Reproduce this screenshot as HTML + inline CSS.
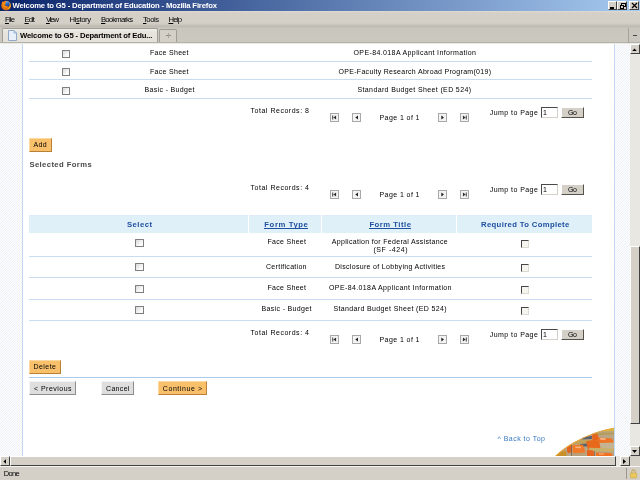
<!DOCTYPE html>
<html><head><meta charset="utf-8"><title>Welcome to G5</title>
<style>
*{box-sizing:border-box;margin:0;padding:0}
html,body{width:640px;height:480px;overflow:hidden;background:#fff;font-family:"Liberation Sans",sans-serif;}
body{position:relative}
.a{position:absolute}
.tx{position:absolute;white-space:pre;line-height:10px;height:10px;opacity:0.999}
#title{left:0;top:0;width:640px;height:11px;background:linear-gradient(90deg,#0a246a 0%,#a6caf0 100%)}
#menu{left:0;top:11px;width:640px;height:15px;background:linear-gradient(180deg,#dedbd4 0,#d4d0c8 2px,#d4d0c8 12px,#c2beb6 15px)}
#tabs{left:0;top:26px;width:640px;height:17px;background:linear-gradient(180deg,#b9b6ae 0,#c9c6be 2px,#cbc8c0 100%)}
#tab{left:2px;top:28px;width:156px;height:15px;background:linear-gradient(180deg,#f1efea 0,#e6e4dd 3px,#e3e0d9 100%);border:1px solid #a09d95;border-bottom:none;border-radius:2px 2px 0 0}
#ntab{left:159px;top:29px;width:18px;height:14px;background:#d4d0c8;border:1px solid #a09d95;border-bottom:none;border-radius:2px 2px 0 0}
.stripe{background:repeating-linear-gradient(135deg,#ffffff 0,#e8eef5 0.884px,#ffffff 1.768px)}
.hl{position:absolute;height:1px;background:#c9dcf2;left:29px;width:562.5px}
.cb{position:absolute;width:8.4px;height:8.2px;border:1px solid #7e7e7e;background:linear-gradient(135deg,#d9d9d9,#fbfbfb 70%);border-radius:0.5px}
.cbd{position:absolute;width:8.2px;height:8.2px;border:1px solid #dcd9d0;border-top:1.4px solid #454545;border-left:1.4px solid #454545;background:#f5f4ef}
.nav{position:absolute;width:9px;height:9px;border:1px solid #a8a8a8;background:#f3f3f3}
.nav svg{position:absolute;left:0;top:0}
.btn{position:absolute}
.or{background:#f9c06c;border:1px solid #fcd9a0;border-right-color:#b98036;border-bottom-color:#b98036}
.gr{background:#dedede;border:1px solid #f4f4f4;border-right-color:#8c8c8c;border-bottom-color:#8c8c8c}
.go{background:#d4d0c8;border:1px solid #fff;border-right-color:#55524c;border-bottom-color:#55524c}
.inp{position:absolute;background:#fff;border:1.2px solid #4a4a4a;border-right-color:#d4d0c8;border-bottom-color:#d4d0c8}
.sb{background:#d4d0c8;border:1px solid #fff;border-right-color:#404040;border-bottom-color:#404040}

</style></head><body>
<div id="title" class="a"></div>
<svg class="a" style="left:0px;top:0" width="13" height="11" viewBox="0 0 13 11"><defs><radialGradient id="fx" cx="0.45" cy="0.45" r="0.6"><stop offset="0" stop-color="#f08c18"/><stop offset="0.7" stop-color="#e06c0c"/><stop offset="1" stop-color="#b84c08"/></radialGradient><linearGradient id="gl" x1="0" y1="0" x2="0.3" y2="1"><stop offset="0" stop-color="#8fd0f8"/><stop offset="0.45" stop-color="#2f78d8"/><stop offset="1" stop-color="#123a9a"/></linearGradient></defs>
<circle cx="6.1" cy="5.6" r="4.9" fill="url(#fx)"/>
<circle cx="7.2" cy="3.9" r="2.7" fill="url(#gl)"/>
<path d="M2 1.2 L3.2 2.2 Q5 1.4 6.2 2.2 Q5.2 3 5.6 4 Q4.6 4.6 5.2 5.6 Q6.4 6.2 7.6 5.6 Q7.4 7.6 5.4 7.6 Q2.6 7.4 2.2 4.6 Q1.6 3 2 1.2 Z" fill="#ee8a14"/>
<path d="M9.3 2.2 Q11.2 4 10.6 6.6 Q9.8 9.2 7.2 9.8 Q9.6 8 9.8 5.6 Q9.9 3.8 9.3 2.2 Z" fill="#f9c426"/>
<path d="M4.2 4.6 Q5 5.4 6 5.3 L5.2 5.9 Z" fill="#a83808"/>
</svg>
<div id="menu" class="a"></div>
<div id="tabs" class="a"></div>

<div id="tab" class="a"></div>
<svg class="a" style="left:8px;top:30px" width="9" height="11" viewBox="0 0 9 11"><path d="M0.5 0.5 H6 L8.5 3 V10.5 H0.5 Z" fill="#e8f1fb" stroke="#8fa8c8" stroke-width="1"/><path d="M6 0.5 V3 H8.5" fill="#bcd2ee" stroke="#8fa8c8" stroke-width="0.8"/></svg>
<div id="ntab" class="a"></div>
<div class="a" style="left:165.5px;top:35px;width:5px;height:1px;background:#8c8982"></div>
<div class="a" style="left:167.5px;top:33px;width:1px;height:5px;background:#a8a59d"></div>
<div class="a" style="left:0;top:42px;width:640px;height:1.4px;background:#b4b1a9"></div><div class="a" style="left:0;top:43.4px;width:640px;height:1px;background:#eceae5"></div>
<!-- window controls -->
<div class="a" style="left:607.5px;top:1px;width:9.5px;height:9px;background:#d4d0c8;border:1px solid #fff;border-right-color:#404040;border-bottom-color:#404040"></div>
<div class="a" style="left:617px;top:1px;width:10px;height:9px;background:#d4d0c8;border:1px solid #fff;border-right-color:#404040;border-bottom-color:#404040"></div>
<div class="a" style="left:628.5px;top:1px;width:10.5px;height:9px;background:#d4d0c8;border:1px solid #fff;border-right-color:#404040;border-bottom-color:#404040"></div>
<div class="a" style="left:610px;top:7px;width:4px;height:1.5px;background:#000"></div>
<div class="a" style="left:621px;top:2.5px;width:4.5px;height:4px;border:1px solid #000;border-top-width:1.5px"></div><div class="a" style="left:619.5px;top:4.5px;width:4.5px;height:4px;border:1px solid #000;border-top-width:1.5px;background:#d4d0c8"></div>
<svg class="a" style="left:630.5px;top:2px" width="7" height="7" viewBox="0 0 7 7"><path d="M1 1 L6 6 M6 1 L1 6" stroke="#000" stroke-width="1.2"/></svg>
<!-- tab bar right: list all tabs -->
<div class="a" style="left:628px;top:28px;width:1px;height:15px;background:#a5a29a"></div>
<div class="a" style="left:633px;top:35px;width:4px;height:1px;background:#444"></div>

<!-- content frame -->
<svg class="a" style="left:0;top:0" width="0" height="0"><defs><pattern id="stp" width="5" height="5" patternUnits="userSpaceOnUse"><rect width="5" height="5" fill="#fff"/><path d="M-1 1 L1 -1 M-1 3.5 L3.5 -1 M-1 6 L6 -1 M1.5 6 L6 1.5 M4 6 L6 4" stroke="#e3eaf3" stroke-width="0.8" fill="none"/></pattern></defs></svg>
<svg class="a" style="left:0;top:44px" width="22" height="412"><rect width="22" height="412" fill="url(#stp)"/></svg>
<div class="a" style="left:22px;top:44px;width:1px;height:412px;background:#c3d8f1"></div>
<div class="a" style="left:614px;top:44px;width:1px;height:412px;background:#c3d8f1"></div>
<svg class="a" style="left:615px;top:44px" width="15" height="412"><rect width="15" height="412" fill="url(#stp)"/></svg>

<!-- vertical scrollbar -->
<div class="a" style="left:630px;top:44px;width:10px;height:412px;background:#e9e7e2"></div>
<div class="a sb" style="left:630px;top:44px;width:10px;height:10px"></div>
<svg class="a" style="left:632.3px;top:47.8px" width="5" height="3.3" viewBox="0 0 6 4"><path d="M0 4 L3 0.5 L6 4 Z" fill="#000"/></svg>
<div class="a sb" style="left:630px;top:245.5px;width:10px;height:178.5px"></div>
<div class="a sb" style="left:630px;top:446px;width:10px;height:10px"></div>
<svg class="a" style="left:632.3px;top:449.5px" width="5" height="3.3" viewBox="0 0 6 4"><path d="M0 0 L3 3.5 L6 0 Z" fill="#000"/></svg>
<!-- horizontal scrollbar -->
<div class="a" style="left:0;top:456px;width:630px;height:10px;background:#e9e7e2"></div>
<div class="a sb" style="left:0;top:456px;width:10px;height:10px"></div>
<svg class="a" style="left:3px;top:458.5px" width="3.4" height="5" viewBox="0 0 4 6"><path d="M4 0 L0.5 3 L4 6 Z" fill="#000"/></svg>
<div class="a sb" style="left:10px;top:456px;width:606px;height:10px"></div>
<div class="a sb" style="left:620px;top:456px;width:10px;height:10px"></div>
<svg class="a" style="left:623.3px;top:458.5px" width="3.4" height="5" viewBox="0 0 4 6"><path d="M0 0 L3.5 3 L0 6 Z" fill="#000"/></svg>
<div class="a" style="left:630px;top:456px;width:10px;height:10px;background:#d4d0c8"></div>
<!-- status bar -->
<div class="a" style="left:0;top:466px;width:640px;height:14px;background:#d4d0c8;border-top:1px solid #f5f4f0"></div>
<div class="a" style="left:626px;top:468px;width:1px;height:11px;background:#9a978f"></div>
<svg class="a" style="left:629px;top:468px" width="9" height="11" viewBox="0 0 9 11"><path d="M2.8 5.2 V3.6 A1.7 1.7 0 0 1 6.2 3.6 V5.2" fill="none" stroke="#c9ab58" stroke-width="1.1"/><rect x="1.3" y="5" width="6.4" height="5" rx="0.6" fill="#e9c75a" stroke="#bfa04a" stroke-width="0.5"/></svg>

<!-- top table -->
<div class="cb" style="left:62px;top:50px"></div>
<div class="hl" style="top:61px"></div>
<div class="cb" style="left:62px;top:68.1px"></div>
<div class="hl" style="top:79px"></div>
<div class="cb" style="left:62px;top:87px"></div>
<div class="hl" style="top:98px"></div>

<div class="nav" style="left:330px;top:113px"><svg width="7" height="7" viewBox="0 0 7 7"><path d="M1.3 1.4H2.2V5.6H1.3ZM5.1 1.4L2.4 3.5L5.1 5.6Z" fill="#2a2a2a"/></svg></div>
<div class="nav" style="left:352px;top:113px"><svg width="7" height="7" viewBox="0 0 7 7"><path d="M5 1.5L2.3 3.5L5 5.5Z" fill="#222"/></svg></div>
<div class="nav" style="left:438px;top:113px"><svg width="7" height="7" viewBox="0 0 7 7"><path d="M2.3 1.5L5 3.5L2.3 5.5Z" fill="#222"/></svg></div>
<div class="nav" style="left:460.3px;top:113px"><svg width="7" height="7" viewBox="0 0 7 7"><path d="M4.8 1.4H5.7V5.6H4.8ZM1.9 1.4L4.6 3.5L1.9 5.6Z" fill="#2a2a2a"/></svg></div>
<div class="inp" style="left:540.5px;top:106.5px;width:17px;height:11px"></div>
<div class="btn go" style="left:561px;top:107px;width:23px;height:11px"></div>
<div class="nav" style="left:330px;top:190px"><svg width="7" height="7" viewBox="0 0 7 7"><path d="M1.3 1.4H2.2V5.6H1.3ZM5.1 1.4L2.4 3.5L5.1 5.6Z" fill="#2a2a2a"/></svg></div>
<div class="nav" style="left:352px;top:190px"><svg width="7" height="7" viewBox="0 0 7 7"><path d="M5 1.5L2.3 3.5L5 5.5Z" fill="#222"/></svg></div>
<div class="nav" style="left:438px;top:190px"><svg width="7" height="7" viewBox="0 0 7 7"><path d="M2.3 1.5L5 3.5L2.3 5.5Z" fill="#222"/></svg></div>
<div class="nav" style="left:460.3px;top:190px"><svg width="7" height="7" viewBox="0 0 7 7"><path d="M4.8 1.4H5.7V5.6H4.8ZM1.9 1.4L4.6 3.5L1.9 5.6Z" fill="#2a2a2a"/></svg></div>
<div class="inp" style="left:540.5px;top:183.5px;width:17px;height:11px"></div>
<div class="btn go" style="left:561px;top:184px;width:23px;height:11px"></div>
<div class="nav" style="left:330px;top:335px"><svg width="7" height="7" viewBox="0 0 7 7"><path d="M1.3 1.4H2.2V5.6H1.3ZM5.1 1.4L2.4 3.5L5.1 5.6Z" fill="#2a2a2a"/></svg></div>
<div class="nav" style="left:352px;top:335px"><svg width="7" height="7" viewBox="0 0 7 7"><path d="M5 1.5L2.3 3.5L5 5.5Z" fill="#222"/></svg></div>
<div class="nav" style="left:438px;top:335px"><svg width="7" height="7" viewBox="0 0 7 7"><path d="M2.3 1.5L5 3.5L2.3 5.5Z" fill="#222"/></svg></div>
<div class="nav" style="left:460.3px;top:335px"><svg width="7" height="7" viewBox="0 0 7 7"><path d="M4.8 1.4H5.7V5.6H4.8ZM1.9 1.4L4.6 3.5L1.9 5.6Z" fill="#2a2a2a"/></svg></div>
<div class="inp" style="left:540.5px;top:328.5px;width:17px;height:11px"></div>
<div class="btn go" style="left:561px;top:329px;width:23px;height:11px"></div>


<!-- Add -->
<div class="btn or" style="left:28.5px;top:137.5px;width:23px;height:14.5px"></div>

<!-- header -->
<div class="a" style="left:28.5px;top:215px;width:563px;height:17.5px;background:#dff0f9;box-shadow:inset 0 0.5px 0 #dde6f8"></div>
<div class="a" style="left:247.7px;top:215px;width:1.6px;height:17.5px;background:#fff"></div>
<div class="a" style="left:320.7px;top:215px;width:1.6px;height:17.5px;background:#fff"></div>
<div class="a" style="left:455.7px;top:215px;width:1.6px;height:17.5px;background:#fff"></div>
<!-- rows -->
<div class="cb" style="left:135.4px;top:238.8px"></div><div class="cbd" style="left:520.9px;top:239.9px"></div>
<div class="hl" style="top:256px"></div>
<div class="cb" style="left:135.4px;top:263px"></div><div class="cbd" style="left:520.9px;top:264.2px"></div>
<div class="hl" style="top:277px"></div>
<div class="cb" style="left:135.4px;top:284.6px"></div><div class="cbd" style="left:520.9px;top:285.6px"></div>
<div class="hl" style="top:298.7px"></div>
<div class="cb" style="left:135.4px;top:305.8px"></div><div class="cbd" style="left:520.9px;top:306.8px"></div>
<div class="hl" style="top:320px"></div>

<!-- Delete + buttons -->
<div class="btn or" style="left:28.6px;top:359.8px;width:32.3px;height:14px"></div>
<div class="a" style="left:29px;top:377px;width:563px;height:1px;background:#a9c9ef"></div>
<div class="btn gr" style="left:28.7px;top:381.2px;width:47.2px;height:14.3px"></div>
<div class="btn gr" style="left:100.7px;top:381.2px;width:33.2px;height:14.3px"></div>
<div class="btn or" style="left:157.5px;top:381.2px;width:49px;height:14.3px"></div>

<!-- chairs image -->
<svg class="a" style="left:554px;top:426px" width="60" height="30" viewBox="0 0 60 30">
<defs><clipPath id="arc"><path d="M1.2 30 Q9 22.5 20 16.3 Q30 10.8 40 7 Q50 3.6 60 1.8 V30 Z"/></clipPath><filter id="bl" x="-5%" y="-5%" width="110%" height="110%"><feGaussianBlur stdDeviation="0.45"/></filter></defs>
<g clip-path="url(#arc)">
<g filter="url(#bl)">
<rect x="-2" y="-2" width="64" height="34" fill="#b9a583"/>
<rect x="46" y="16" width="14" height="7" fill="#c4b494"/>
<path d="M48 2 L60 1 V5 L50 5.5 Z" fill="#d9b242"/>
<path d="M38 7 L60 6.5 V8.6 L40 9 Z" fill="#b59c5c"/>
<path d="M26 11 L38 10 L38 13 L28 13.5 Z" fill="#5a6070"/>
<path d="M18 15 L37 13.6 L38 17.2 L20 18 Z" fill="#c2a258"/>
<path d="M26 18 L34 17.5 L34 20.5 L27 20.5 Z" fill="#5c606c"/>
<path d="M38 8.5 L44 8 L44.5 14 L38.5 14.5 Z" fill="#e8661a"/>
<path d="M44 11.5 L58 12.5 L60 16.5 L46 17 L43 14 Z" fill="#ee7426"/>
<path d="M46 12 L52 12.3 L51 14 L46.5 13.8 Z" fill="#f8b488"/>
<path d="M32 15.5 Q38 13 45 14.5 L46.5 22.5 L34 23.5 Z" fill="#e8681a"/>
<path d="M35 21.8 L60 22.6 V25.6 L36 25.2 Z" fill="#c9b068"/>
<path d="M12.5 20 L17 18.6 L17.5 26.5 L13.5 27 Z" fill="#e4621a"/>
<path d="M18 19 L29 18.8 L31.5 26.5 L19 27.5 Z" fill="#f07a2a"/>
<path d="M21 20.5 L27 20.6 L27 22.2 L21.5 22 Z" fill="#f9b27c"/>
<rect x="17" y="19" width="0.9" height="11" fill="#6e5e4a" opacity="0.8"/>
<rect x="40" y="25" width="0.8" height="5" fill="#6e5e4a" opacity="0.8"/>
<path d="M33 24 L39.5 24.5 L40 30 L33 30 Z" fill="#e8641a"/>
<path d="M42 26.5 L57 27 L59 30 L42 30 Z" fill="#ee7224"/>
<path d="M45 27.2 L50 27.4 L50 28.6 L45 28.4 Z" fill="#f7b07c"/>
<path d="M3 27 L12 24.5 L12.5 30 L2 30 Z" fill="#c8902a"/>
<path d="M19 27.5 L31 27 L32 30 L19 30 Z" fill="#b8a07a"/>
</g>
<path d="M1.2 30 Q9 22.5 20 16.3 Q30 10.8 40 7 Q50 3.6 60 1.8" fill="none" stroke="#eda42e" stroke-width="1.6"/>
</g></svg>

<div class="tx" style="left:12.50px;top:1.20px;font-size:7.7px;font-weight:bold;color:#fff;letter-spacing:-0.167px;">Welcome to G5 - Department of Education - Mozilla Firefox</div>
<div class="tx" style="left:5.00px;top:14.80px;font-size:7.7px;font-weight:normal;color:#000;letter-spacing:-0.797px;"><u>F</u>ile</div>
<div class="tx" style="left:24.50px;top:14.80px;font-size:7.7px;font-weight:normal;color:#000;letter-spacing:-0.917px;"><u>E</u>dit</div>
<div class="tx" style="left:46.00px;top:14.80px;font-size:7.7px;font-weight:normal;color:#000;letter-spacing:-1.177px;"><u>V</u>iew</div>
<div class="tx" style="left:69.50px;top:14.80px;font-size:7.7px;font-weight:normal;color:#000;letter-spacing:-0.404px;">Hi<u>s</u>tory</div>
<div class="tx" style="left:101.00px;top:14.80px;font-size:7.7px;font-weight:normal;color:#000;letter-spacing:-0.807px;"><u>B</u>ookmarks</div>
<div class="tx" style="left:143.00px;top:14.80px;font-size:7.7px;font-weight:normal;color:#000;letter-spacing:-0.488px;"><u>T</u>ools</div>
<div class="tx" style="left:168.50px;top:14.80px;font-size:7.7px;font-weight:normal;color:#000;letter-spacing:-0.771px;"><u>H</u>elp</div>
<div class="tx" style="left:20.00px;top:30.80px;font-size:7.7px;font-weight:bold;color:#000;letter-spacing:-0.140px;">Welcome to G5 - Department of Edu...</div>
<div class="tx" style="left:3.80px;top:468.70px;font-size:7.5px;font-weight:normal;color:#000;letter-spacing:-0.679px;">Done</div>
<div class="tx" style="left:150.00px;top:47.50px;font-size:7.0px;font-weight:normal;color:#000;letter-spacing:0.299px;">Face Sheet</div>
<div class="tx" style="left:353.50px;top:47.50px;font-size:7.0px;font-weight:normal;color:#000;letter-spacing:0.387px;">OPE-84.018A Applicant Information</div>
<div class="tx" style="left:150.00px;top:66.50px;font-size:7.0px;font-weight:normal;color:#000;letter-spacing:0.299px;">Face Sheet</div>
<div class="tx" style="left:338.50px;top:66.50px;font-size:7.0px;font-weight:normal;color:#000;letter-spacing:0.299px;">OPE-Faculty Research Abroad Program(019)</div>
<div class="tx" style="left:144.50px;top:85.00px;font-size:7.0px;font-weight:normal;color:#000;letter-spacing:0.344px;">Basic - Budget</div>
<div class="tx" style="left:357.50px;top:85.00px;font-size:7.0px;font-weight:normal;color:#000;letter-spacing:0.371px;">Standard Budget Sheet (ED 524)</div>
<div class="tx" style="left:250.50px;top:105.60px;font-size:7.0px;font-weight:normal;color:#000;letter-spacing:0.527px;">Total Records: 8</div>
<div class="tx" style="left:379.50px;top:113.20px;font-size:7.0px;font-weight:normal;color:#000;letter-spacing:0.419px;">Page 1 of 1</div>
<div class="tx" style="left:489.80px;top:107.60px;font-size:7.0px;font-weight:normal;color:#000;letter-spacing:0.436px;">Jump to Page</div>
<div class="tx" style="left:543.00px;top:108.20px;font-size:7.0px;font-weight:normal;color:#000;letter-spacing:0.000px;">1</div>
<div class="tx" style="left:568.00px;top:107.60px;font-size:7.0px;font-weight:normal;color:#000;letter-spacing:-0.344px;">Go</div>
<div class="tx" style="left:250.50px;top:182.60px;font-size:7.0px;font-weight:normal;color:#000;letter-spacing:0.527px;">Total Records: 4</div>
<div class="tx" style="left:379.50px;top:190.20px;font-size:7.0px;font-weight:normal;color:#000;letter-spacing:0.419px;">Page 1 of 1</div>
<div class="tx" style="left:489.80px;top:184.60px;font-size:7.0px;font-weight:normal;color:#000;letter-spacing:0.436px;">Jump to Page</div>
<div class="tx" style="left:543.00px;top:185.20px;font-size:7.0px;font-weight:normal;color:#000;letter-spacing:0.000px;">1</div>
<div class="tx" style="left:568.00px;top:184.60px;font-size:7.0px;font-weight:normal;color:#000;letter-spacing:-0.344px;">Go</div>
<div class="tx" style="left:250.50px;top:327.60px;font-size:7.0px;font-weight:normal;color:#000;letter-spacing:0.527px;">Total Records: 4</div>
<div class="tx" style="left:379.50px;top:335.20px;font-size:7.0px;font-weight:normal;color:#000;letter-spacing:0.419px;">Page 1 of 1</div>
<div class="tx" style="left:489.80px;top:329.60px;font-size:7.0px;font-weight:normal;color:#000;letter-spacing:0.436px;">Jump to Page</div>
<div class="tx" style="left:543.00px;top:330.20px;font-size:7.0px;font-weight:normal;color:#000;letter-spacing:0.000px;">1</div>
<div class="tx" style="left:568.00px;top:329.60px;font-size:7.0px;font-weight:normal;color:#000;letter-spacing:-0.344px;">Go</div>
<div class="tx" style="left:33.50px;top:139.80px;font-size:7.0px;font-weight:normal;color:#000;letter-spacing:0.316px;">Add</div>
<div class="tx" style="left:29.40px;top:159.60px;font-size:7.7px;font-weight:bold;color:#4a4a4a;letter-spacing:0.387px;">Selected Forms</div>
<div class="tx" style="left:33.40px;top:362.00px;font-size:7.0px;font-weight:normal;color:#000;letter-spacing:0.473px;">Delete</div>
<div class="tx" style="left:34.00px;top:383.50px;font-size:7.0px;font-weight:normal;color:#000;letter-spacing:0.469px;">&lt; Previous</div>
<div class="tx" style="left:106.00px;top:383.50px;font-size:7.0px;font-weight:normal;color:#000;letter-spacing:0.321px;">Cancel</div>
<div class="tx" style="left:162.80px;top:383.50px;font-size:7.0px;font-weight:normal;color:#000;letter-spacing:0.571px;">Continue &gt;</div>
<div class="tx" style="left:497.50px;top:433.50px;font-size:7.0px;font-weight:normal;color:#3878c0;letter-spacing:0.484px;">^ Back to Top</div>
<div class="tx" style="left:127.00px;top:219.80px;font-size:7.7px;font-weight:bold;color:#1f4fa0;letter-spacing:0.469px;">Select</div>
<div class="a" style="left:264.30px;top:228.00px;width:43.60px;height:0.9px;background:#1f4fa0"></div>
<div class="tx" style="left:264.30px;top:219.80px;font-size:7.7px;font-weight:bold;color:#1f4fa0;letter-spacing:0.608px;">Form Type</div>
<div class="a" style="left:369.40px;top:228.00px;width:41.60px;height:0.9px;background:#1f4fa0"></div>
<div class="tx" style="left:369.40px;top:219.80px;font-size:7.7px;font-weight:bold;color:#1f4fa0;letter-spacing:0.508px;">Form Title</div>
<div class="tx" style="left:481.00px;top:219.80px;font-size:7.7px;font-weight:bold;color:#1f4fa0;letter-spacing:0.361px;">Required To Complete</div>
<div class="tx" style="left:267.50px;top:237.30px;font-size:7.0px;font-weight:normal;color:#000;letter-spacing:0.299px;">Face Sheet</div>
<div class="tx" style="left:331.80px;top:237.30px;font-size:7.0px;font-weight:normal;color:#000;letter-spacing:0.317px;">Application for Federal Assistance</div>
<div class="tx" style="left:373.40px;top:244.60px;font-size:7.0px;font-weight:normal;color:#000;letter-spacing:0.567px;">(SF -424)</div>
<div class="tx" style="left:266.00px;top:261.50px;font-size:7.0px;font-weight:normal;color:#000;letter-spacing:0.294px;">Certification</div>
<div class="tx" style="left:335.00px;top:261.50px;font-size:7.0px;font-weight:normal;color:#000;letter-spacing:0.312px;">Disclosure of Lobbying Activities</div>
<div class="tx" style="left:267.50px;top:282.50px;font-size:7.0px;font-weight:normal;color:#000;letter-spacing:0.299px;">Face Sheet</div>
<div class="tx" style="left:329.00px;top:282.50px;font-size:7.0px;font-weight:normal;color:#000;letter-spacing:0.387px;">OPE-84.018A Applicant Information</div>
<div class="tx" style="left:261.50px;top:304.10px;font-size:7.0px;font-weight:normal;color:#000;letter-spacing:0.344px;">Basic - Budget</div>
<div class="tx" style="left:333.50px;top:304.10px;font-size:7.0px;font-weight:normal;color:#000;letter-spacing:0.354px;">Standard Budget Sheet (ED 524)</div>
</body></html>
